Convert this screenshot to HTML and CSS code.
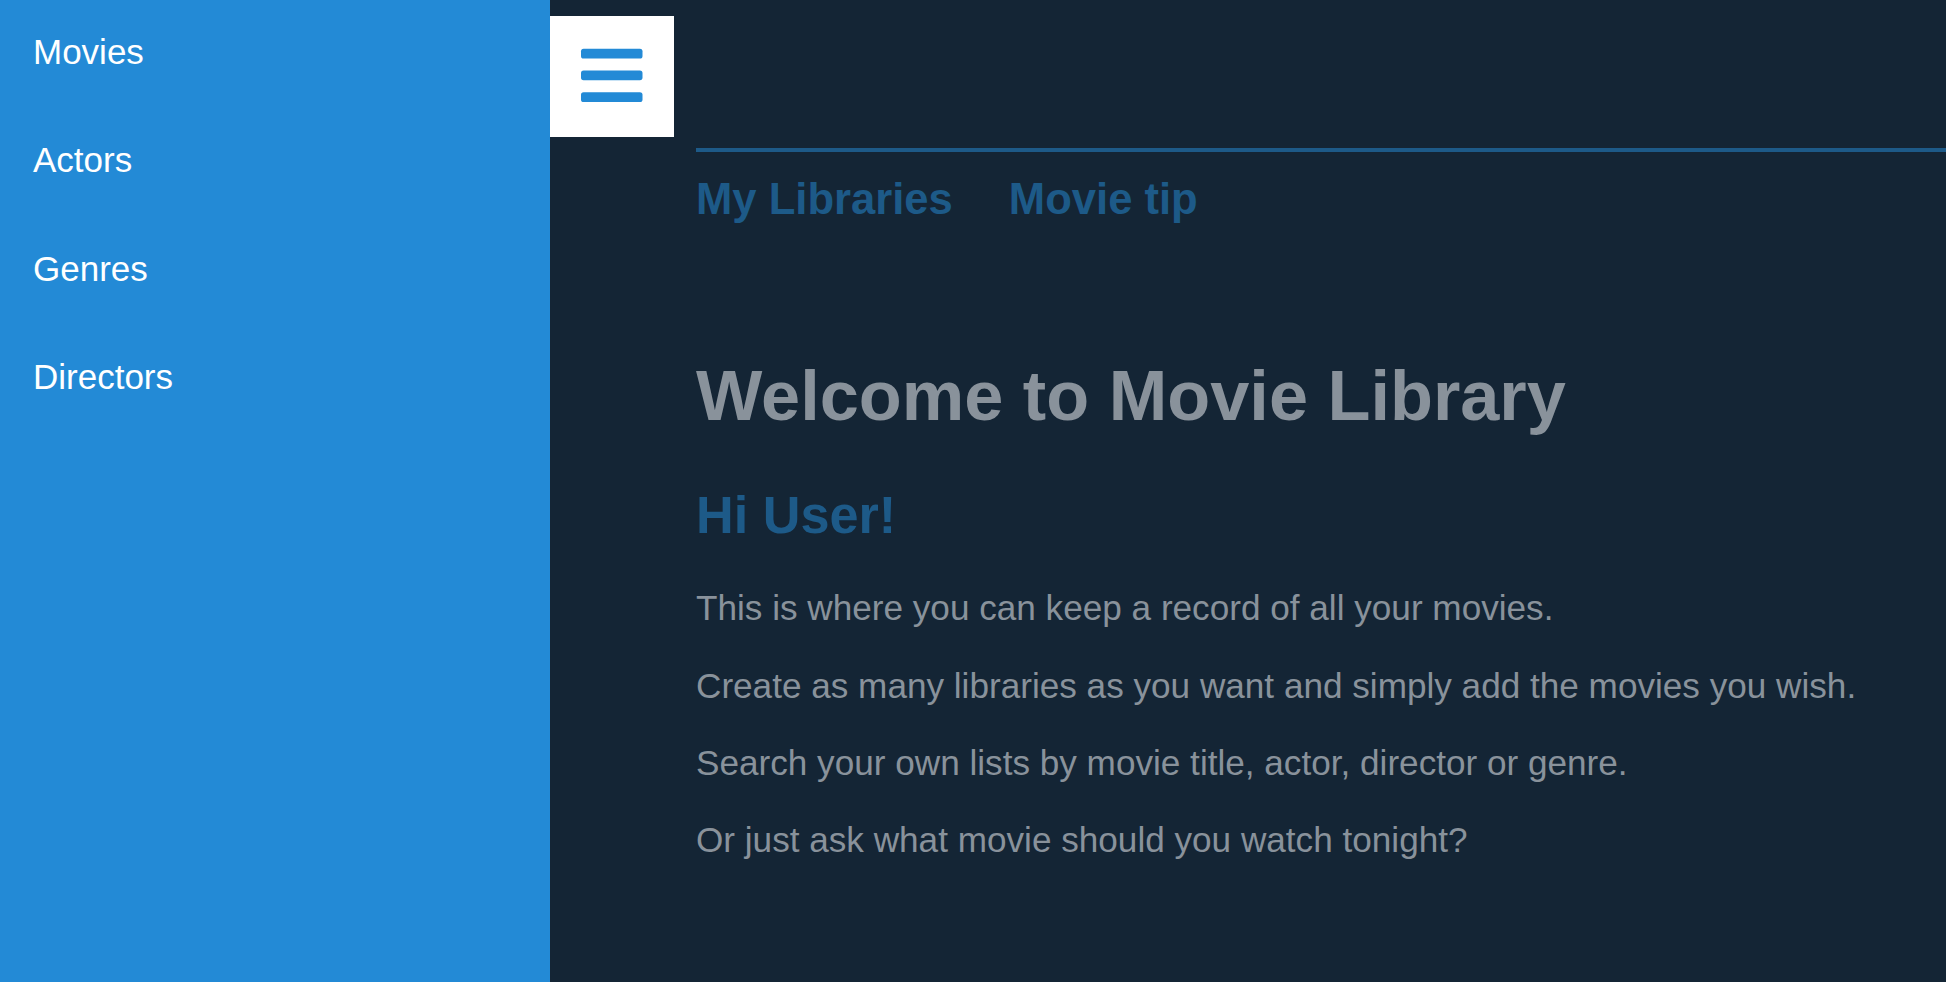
FILE: index.html
```html
<!DOCTYPE html>
<html lang="en">
<head>
<meta charset="utf-8">
<title>Movie Library</title>
<link rel="stylesheet" href="styles.css">
</head>
<body>
<div class="app">
  <nav class="sidebar">
    <a class="side-link" href="#">Movies</a>
    <a class="side-link" href="#">Actors</a>
    <a class="side-link" href="#">Genres</a>
    <a class="side-link" href="#">Directors</a>
  </nav>
  <main class="main">
    <button class="menu-btn" type="button" aria-label="Menu">
      <svg class="menu-icon" viewBox="0 0 124 121" width="124" height="121">
        <rect x="31" y="32.7" width="61.5" height="9.8" rx="2.6" />
        <rect x="31" y="54.4" width="61.5" height="9.8" rx="2.6" />
        <rect x="31" y="76.2" width="61.5" height="9.8" rx="2.6" />
      </svg>
    </button>
    <div class="content">
      <nav class="topnav">
        <a class="top-link" href="#">My Libraries</a>
        <a class="top-link" href="#">Movie tip</a>
      </nav>
      <h1 class="title">Welcome to Movie Library</h1>
      <h2 class="greeting">Hi User!</h2>
      <p class="text">This is where you can keep a record of all your movies.</p>
      <p class="text">Create as many libraries as you want and simply add the movies you wish.</p>
      <p class="text">Search your own lists by movie title, actor, director or genre.</p>
      <p class="text">Or just ask what movie should you watch tonight?</p>
    </div>
  </main>
</div>
</body>
</html>
```

FILE: styles.css
```css
html, body {
  margin: 0;
  padding: 0;
  height: 100%;
}

body {
  font-family: "Liberation Sans", Arial, sans-serif;
  background: #142535;
  overflow: hidden;
}

.app {
  display: flex;
  height: 982px;
}

.sidebar {
  width: 550px;
  flex: 0 0 550px;
  background: #238ad6;
  display: flex;
  flex-direction: column;
}

.side-link {
  display: block;
  color: #ffffff;
  text-decoration: none;
  font-size: 35px;
  line-height: 42px;
  padding: 30.8px 33px 35.6px;
}

.main {
  flex: 1;
  display: flex;
  flex-direction: column;
  align-items: flex-start;
  background: #142535;
}

.menu-btn {
  margin-top: 16px;
  width: 124px;
  height: 121px;
  padding: 0;
  border: 0;
  background: #ffffff;
  display: block;
}

.menu-icon {
  display: block;
}

.menu-icon rect {
  fill: #238ad6;
}

.content {
  align-self: stretch;
  margin-left: 146px;
  margin-top: 11px;
  border-top: 4px solid #1d5a88;
}

.topnav {
  display: flex;
  gap: 56px;
  padding-top: 21.5px;
}

.top-link {
  color: #1d5a88;
  font-weight: bold;
  font-size: 43.6px;
  line-height: 50px;
  text-decoration: none;
}

.title {
  margin: 132px 0 0;
  color: #89929b;
  font-size: 70.3px;
  line-height: 80px;
  font-weight: bold;
}

.greeting {
  margin: 49px 0 0;
  color: #1d5a88;
  font-size: 52.2px;
  line-height: 60px;
  font-weight: bold;
}

.greeting + .text {
  margin-top: 42.8px;
}

.text {
  margin: 0 0 35.4px;
  color: #89929b;
  font-size: 35.15px;
  line-height: 42px;
}
```
